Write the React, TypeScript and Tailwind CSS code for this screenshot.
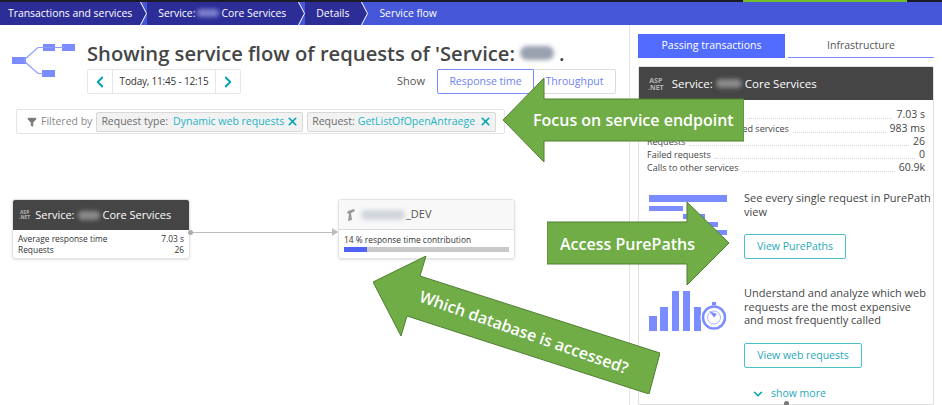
import { ChevronDown, ChevronLeft, ChevronRight, Filter, X } from 'lucide-react';

const font = { fontFamily: '"Open Sans", sans-serif' };

function Blur({ w, h = 'h-3', color = 'bg-gray-400' }: { w: string; h?: string; color?: string }) {
  return <span className={`inline-block rounded-full blur-[2px] ${w} ${h} ${color}`} />;
}

function Crumb({ active, first, children }: { active?: boolean; first?: boolean; children?: React.ReactNode }) {
  return (
    <div className={`flex h-full items-center ${first ? 'pl-2 pr-2' : 'pl-[11px] pr-3'} ${active ? '' : 'bg-[#2d2d98]'}`}>
      <span className="flex items-center whitespace-nowrap text-[10.4px] text-white">{children}</span>
    </div>
  );
}

function Sep() {
  return (
    <svg viewBox="0 0 7 23" className="h-[23px] w-[7px] shrink-0">
      <rect width="7" height="23" fill="#4556d8" />
      <path d="M0 0 L6 11.5 L0 23 Z" fill="#2d2d98" />
      <path d="M0.5 0 L6.5 11.5 L0.5 23" fill="none" stroke="#fff" strokeWidth="1" />
    </svg>
  );
}

function MetricRow({ label, value }: { label: string; value: string }) {
  return (
    <div className="flex h-[13.3px] items-end text-[9px] leading-[13px] text-[#454646]">
      <span className="whitespace-nowrap">{label}</span>
      <span className="mx-1 mb-[2px] flex-1 border-b border-dotted border-gray-300" />
      <span className="text-[10.5px]">{value}</span>
    </div>
  );
}

function Chip({ name, value, className, gap }: { name: string; value: string; className: string; gap: string }) {
  return (
    <div className={`flex h-[20px] items-center justify-between rounded-[2px] border border-[#d8d8d8] bg-[#f2f2f2] pl-1 pr-[3px] text-[10.5px] ${className}`}>
      <span className="whitespace-nowrap">
        <span className="text-[#6d6d6d]">{name}</span>
        <span className={`text-[#1eb4c6] ${gap}`}>{value}</span>
      </span>
      <X className="h-[13px] w-[13px] text-[#00a1b2]" strokeWidth={3} />
    </div>
  );
}

function FlowIcon() {
  return (
    <svg viewBox="0 0 64 36" className="h-[36px] w-[64px] shrink-0">
      <g fill="#7a8cff">
        <rect x="0" y="14" width="14" height="7" />
        <rect x="31" y="1" width="12" height="7" />
        <rect x="50" y="1" width="13" height="7" />
        <rect x="30" y="27" width="13" height="7" />
      </g>
      <path d="M12 17 L26 4.5 H52 M12 18 L26 30.5 H32" fill="none" stroke="#8d9cff" strokeWidth="1.2" />
    </svg>
  );
}

function PurePathIcon() {
  return (
    <svg viewBox="0 0 79 41" className="h-[41px] w-[79px] shrink-0">
      <g fill="#7a8cff">
        <rect x="0" y="0" width="78" height="7" />
        <rect x="0" y="11" width="34" height="5" />
        <rect x="34" y="19" width="22" height="5" />
        <rect x="50" y="27" width="19" height="5" />
        <rect x="60" y="35" width="18" height="5" />
      </g>
    </svg>
  );
}

function RequestsIcon() {
  return (
    <svg viewBox="0 0 79 42" className="h-[42px] w-[79px] shrink-0">
      <g fill="#7a8cff">
        <rect x="0" y="26" width="8" height="15" />
        <rect x="11" y="17" width="8" height="24" />
        <rect x="23" y="1" width="7" height="40" />
        <rect x="34" y="1" width="7" height="40" />
        <rect x="45" y="17" width="7" height="24" />
      </g>
      <circle cx="65" cy="27.5" r="12" fill="#fff" stroke="#fff" strokeWidth="3" />
      <circle cx="65" cy="27.5" r="11" fill="none" stroke="#7a8cff" strokeWidth="2.5" />
      <circle cx="65" cy="27.5" r="6.5" fill="none" stroke="#a9b4ff" strokeWidth="1" />
      <rect x="63" y="12" width="4" height="3" fill="#7a8cff" />
      <path d="M65 27.5 L60 21 L68 24 Z" fill="#7a8cff" />
    </svg>
  );
}

function AspBadge({ small }: { small?: boolean }) {
  return (
    <span className={`flex shrink-0 flex-col items-center font-bold text-[#b5b5b5] ${small ? 'text-[5px] leading-[5px]' : 'text-[7px] leading-[7px]'}`}>
      <span>ASP</span>
      <span>.NET</span>
    </span>
  );
}

function Arrow({ className, points, viewBox, text, textClass }: { className: string; points: string; viewBox: string; text: string; textClass: string }) {
  return (
    <div className={`absolute ${className}`}>
      <svg viewBox={viewBox} className="absolute inset-0 h-full w-full">
        <polygon points={points} fill="#70ad47" stroke="#507e32" strokeWidth="1" />
      </svg>
      <span className={`absolute whitespace-nowrap font-semibold text-white ${textClass}`} style={{ fontFamily: '"Open Sans", sans-serif' }}>{text}</span>
    </div>
  );
}

export default function App() {
  return (
    <div className="relative flex h-[405px] w-[942px] flex-col overflow-hidden bg-white text-[#454646]" style={font}>
      <div className="flex h-[2px] shrink-0 justify-start bg-[#1c1c28] pl-[743px]">
        <div className="h-full w-[164px] bg-[#73be28]" />
      </div>

      <nav className="flex h-[23px] shrink-0 items-center bg-[#4556d8]">
        <Crumb first>Transactions and services</Crumb>
        <Sep />
        <Crumb>
          Service:
          <Blur w="w-[22px] mx-[2px]" h="h-2" color="bg-[#7c80cc]" />
          Core Services
        </Crumb>
        <Sep />
        <Crumb>Details</Crumb>
        <Sep />
        <Crumb active>Service flow</Crumb>
      </nav>

      <div className="flex min-h-0 flex-1">
        <main className="w-[630px] shrink-0 border-r border-[#e4e4e4]">
          <div className="flex pl-3 pt-[18px]">
            <FlowIcon />
            <div className="-mt-[3px] ml-[11px] flex-1">
              <h1 className="flex items-center whitespace-nowrap text-[20.2px] font-semibold leading-[26px]">
                Showing service flow of requests of 'Service:
                <Blur w="w-[34px] ml-[5px]" h="h-[14px]" />
                <span className="ml-[5px]">.</span>
              </h1>
              <div className="mt-[3px] flex items-center pr-[13px]">
                <div className="flex h-[25px] w-[154px] items-center rounded-[2px] border border-[#e6e6e6]">
                  <div className="flex h-full w-[25px] items-center justify-center border-r border-[#e6e6e6]">
                    <ChevronLeft className="h-[18px] w-[18px] text-[#00a1b2]" strokeWidth={2.5} />
                  </div>
                  <span className="flex-1 whitespace-nowrap text-center text-[10px] font-medium tracking-[-0.2px] text-[#333]">Today, 11:45 - 12:15</span>
                  <div className="flex h-full w-[25px] items-center justify-center border-l border-[#e6e6e6]">
                    <ChevronRight className="h-[18px] w-[18px] text-[#00a1b2]" strokeWidth={2.5} />
                  </div>
                </div>
                <span className="ml-auto mr-3 text-[11px] text-[#555]">Show</span>
                <div className="flex h-[25px] text-[10.5px] text-[#6f82f5]">
                  <div className="flex w-[97px] items-center justify-center rounded-l-[2px] border border-[#7a8cff]">Response time</div>
                  <div className="flex w-[82px] items-center justify-center rounded-r-[2px] border border-l-0 border-[#dcdcdc]">Throughput</div>
                </div>
              </div>
            </div>
          </div>

          <div className="ml-4 mt-[15px] flex h-[25px] w-[489px] items-center gap-1 rounded-[2px] border border-[#e4e4e4] pl-[10px] pr-2">
            <Filter className="h-[10px] w-[10px] fill-[#777] text-[#777]" />
            <span className="whitespace-nowrap text-[10.5px] text-[#888]">Filtered by</span>
            <Chip name="Request type:" value="Dynamic web requests" gap="ml-[5px]" className="w-[207px]" />
            <Chip name="Request:" value="GetListOfOpenAntraege" gap="ml-[3px]" className="w-[189px]" />
          </div>

          <div className="mt-[65px] flex items-start pl-3">
            <section className="h-[60px] w-[178px] shrink-0 overflow-hidden rounded-[3px] border border-[#e4e4e4] shadow-sm">
              <header className="flex h-[30px] items-center gap-[5px] bg-[#454545] px-[6px] text-[11px] text-white">
                <AspBadge small />
                <span className="flex items-center whitespace-nowrap">
                  Service:
                  <Blur w="w-[22px] mx-[3px]" h="h-[9px]" color="bg-[#8a8a8a]" />
                  Core Services
                </span>
              </header>
              <div className="px-[5px] pt-[3px] text-[8.4px] font-medium leading-[11px] text-[#333]">
                <div className="flex justify-between"><span>Average response time</span><span>7.03 s</span></div>
                <div className="flex justify-between"><span>Requests</span><span>26</span></div>
              </div>
            </section>

            <div className="mt-[29px] flex w-[148px] shrink-0 items-center">
              <span className="-ml-[2px] h-[5px] w-[5px] shrink-0 rounded-full bg-[#aaa]" />
              <span className="h-px flex-1 bg-[#bdbdbd]" />
              <span className="h-0 w-0 border-y-[4px] border-l-[6px] border-y-transparent border-l-[#bdbdbd]" />
            </div>

            <section className="h-[60px] w-[177px] shrink-0 overflow-hidden rounded-[3px] border border-[#e4e4e4] shadow-sm">
              <header className="flex h-[30px] items-center gap-[5px] border-b border-[#dcdcdc] bg-[#f8f8f8] px-[7px] text-[11px] text-[#555]">
                <svg viewBox="0 0 10 13" className="h-[13px] w-[10px] shrink-0">
                  <path d="M2 13 L3 6 L1 5 L2 3 L8 1 L9 3 L5 5 L6 12 Z" fill="#999" />
                </svg>
                <span className="flex items-center whitespace-nowrap">
                  <Blur w="w-[44px] mr-[1px]" h="h-[10px]" color="bg-gray-300" />
                  _DEV
                </span>
              </header>
              <div className="px-[5px] pt-[4px] text-[8.4px] font-medium leading-[11px] text-[#333]">
                <div>14 % response time contribution</div>
                <div className="mt-[2px] flex h-[5px] w-full bg-[#c9c9c9]">
                  <div className="h-full w-[14%] bg-[#4f63f5]" />
                </div>
              </div>
            </section>
          </div>
        </main>

        <aside className="flex min-w-0 flex-1 flex-col pl-2 pr-2 pt-[9px]">
          <div className="flex h-[24px] shrink-0 gap-[3px] text-[10.5px]">
            <div className="flex w-[147px] items-center justify-center bg-[#526cff] text-white">Passing transactions</div>
            <div className="flex w-[146px] items-center justify-center border-b border-[#7a8cff] text-[#555]">Infrastructure</div>
          </div>

          <section className="mt-[8px] flex-1 rounded-t-[2px] border border-[#e0e0e0]">
            <header className="flex h-[33px] items-center gap-2 bg-[#454545] px-[9px] text-[11.5px] text-white">
              <AspBadge />
              <span className="flex items-center whitespace-nowrap">
                Service:
                <Blur w="w-[26px] mx-[3px]" h="h-[9px]" color="bg-[#8a8a8a]" />
                Core Services
              </span>
            </header>
            <div className="px-2 pt-[8px]">
              <MetricRow label="Average response time" value="7.03 s" />
              <MetricRow label="Time consumed by called services" value="983 ms" />
              <MetricRow label="Requests" value="26" />
              <MetricRow label="Failed requests" value="0" />
              <MetricRow label="Calls to other services" value="60.9k" />
            </div>

            <div className="mt-[17px] flex gap-[16px] pl-[10px]">
              <div className="pt-[4px]"><PurePathIcon /></div>
              <div>
                <p className="whitespace-nowrap text-[11px] leading-[13.5px]">See every single request in PurePath<br />view</p>
                <button className="mt-[16px] h-[25px] w-[102px] rounded-[2px] border border-[#4cc0cf] text-[10.5px] text-[#1fa9ba]">View PurePaths</button>
              </div>
            </div>

            <div className="mt-[27px] flex gap-[16px] pl-[10px]">
              <div className="pt-[4px]"><RequestsIcon /></div>
              <div>
                <p className="whitespace-nowrap text-[11px] leading-[13.5px]">Understand and analyze which web<br />requests are the most expensive<br />and most frequently called</p>
                <button className="mt-[16px] h-[25px] w-[118px] rounded-[2px] border border-[#4cc0cf] text-[10.5px] text-[#1fa9ba]">View web requests</button>
              </div>
            </div>

            <div className="mt-[18px] flex items-center gap-[6px] pl-[112px] text-[10.5px] text-[#1fa9ba]">
              <ChevronDown className="h-[14px] w-[14px] text-[#00a1b2]" strokeWidth={2.5} />
              show more
            </div>
          </section>
        </aside>
      </div>

      <span className="absolute left-[784px] top-[401px] h-[5px] w-[5px] rounded-full bg-[#777]" />

      <Arrow
        className="left-[503px] top-[78px] h-[84px] w-[241px]"
        viewBox="0 0 241 84"
        points="0,42 41,0 41,21 241,21 241,63 41,63 41,84"
        text="Focus on service endpoint"
        textClass="left-[30px] top-[28px] text-[16px] leading-[28px]"
      />
      <Arrow
        className="left-[547px] top-[202px] h-[83px] w-[182px]"
        viewBox="0 0 182 83"
        points="0,20 140,20 140,0 182,41 140,83 140,62 0,62"
        text="Access PurePaths"
        textClass="left-[13px] top-[28px] text-[16px] leading-[28px]"
      />
      <Arrow
        className="left-[373px] top-[256px] h-[138px] w-[287px]"
        viewBox="0 0 287 138"
        points="0,26 53,0 47,20 287,97 276,138 34,60 28,80"
        text="Which database is accessed?"
        textClass="left-[41px] top-[62px] origin-center rotate-[19.3deg] text-[16px] leading-[28px]"
      />
    </div>
  );
}
